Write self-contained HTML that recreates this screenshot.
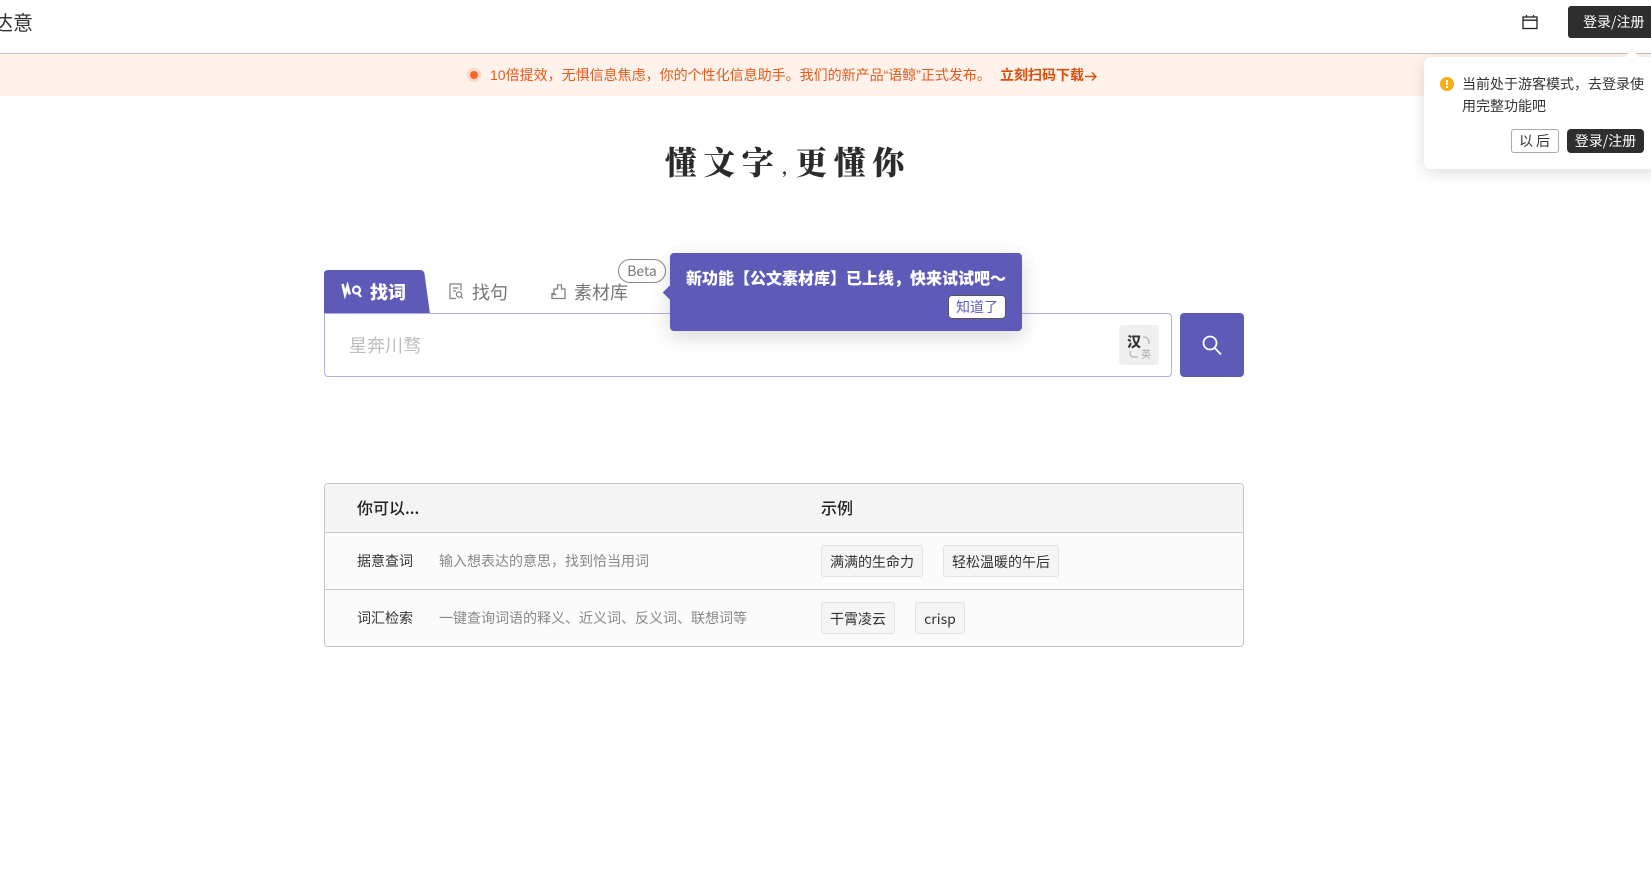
<!DOCTYPE html>
<html lang="zh-CN">
<head>
<meta charset="utf-8">
<title>达意</title>
<style>
html,body{margin:0;padding:0;width:1651px;height:888px;overflow:hidden;background:#fff;}
body{position:relative;font-family:"Liberation Sans","Noto Sans CJK SC",sans-serif;font-size:14px;color:#333;}
.a{position:absolute;white-space:nowrap;}
.n{font-family:"Noto Sans CJK SC",sans-serif;}
.tag{position:absolute;height:30px;line-height:32px;background:#f5f5f5;border:1px solid #e2e2e2;border-radius:3px;text-align:center;font-family:"Noto Sans CJK SC",sans-serif;font-size:14px;color:#333;box-sizing:content-box;}
</style>
</head>
<body>
<!-- header -->
<div class="a" style="left:0;top:53px;width:1651px;height:1px;background:#c8c4c4"></div>
<div class="a n" style="left:-7px;top:8px;font-size:20px;line-height:28px;color:#333">达意</div>
<svg class="a" style="left:1522px;top:14px" width="16" height="16" viewBox="0 0 16 16" fill="none" stroke="#222" stroke-width="1.3"><rect x="1" y="3" width="14" height="11.5"/><path d="M1 6.2H15M4.5 1V3M11.5 1V3"/></svg>
<div class="a n" style="left:1568px;top:6px;width:90px;height:32px;background:#2e2e2e;border-radius:3px;color:#fff;line-height:32px;padding-left:15px;box-sizing:border-box;font-size:14px">登录/注册</div>

<!-- banner -->
<div class="a" style="left:0;top:54px;width:1651px;height:42px;background:#fef2ea"></div>
<div class="a" style="left:467px;top:68px;width:14px;height:14px;border-radius:50%;background:#fcd9c6"></div>
<div class="a" style="left:470px;top:71px;width:8px;height:8px;border-radius:50%;background:#f7672a"></div>
<div class="a" style="left:490px;top:64px;font-size:14px;line-height:22px;color:#e35a1c">10倍提效&#65292;无惧信息焦虑&#65292;你的个性化信息助手。我们的新产品“语鲸”正式发布。</div>
<div class="a n" style="left:1000px;top:64px;font-size:14px;line-height:22px;font-weight:700;color:#d94f0c">立刻扫码下载</div>
<svg class="a" style="left:1084px;top:69px" width="14" height="14" viewBox="0 0 14 14" fill="none" stroke="#d94f0c" stroke-width="1.4"><path d="M1 7.5H12M8 3.5L12 7.5L8 11.5"/></svg>

<!-- title -->
<div class="a" style="left:665px;top:138px;font-family:'Noto Serif CJK SC',serif;font-size:32px;line-height:46px;font-weight:900;color:#2b2b2b;letter-spacing:6.4px">懂文字<span style="font-size:16px;letter-spacing:8.2px;margin-left:1.6px">,</span>更懂你</div>

<!-- tabs -->
<svg class="a" style="left:324px;top:270px" width="108" height="44" viewBox="0 0 108 44"><path d="M0 44V4Q0 0 4 0H96Q100 0 100.500 4L106 44Z" fill="#5e5bb8"/></svg>
<svg class="a" style="left:341px;top:281px" width="22" height="20" viewBox="0 0 22 20" fill="none" stroke="#fff"><path stroke-width="2.600" d="M1.500 3L4 13.500L6.500 5L8.800 13.500"/><circle stroke-width="2.200" cx="15.500" cy="9" r="3.500"/><path stroke-width="2.200" d="M16.500 11.500L20 16"/></svg>
<div class="a n" style="left:370px;top:278px;font-size:18px;line-height:28px;font-weight:900;color:#fff">找词</div>
<svg class="a" style="left:449px;top:283px" width="15" height="17" viewBox="0 0 15 17" fill="none" stroke="#808080" stroke-width="1.200"><path d="M7 15.500H1V1H12V7.500M4 5H9.500M4 8H7"/><circle cx="10" cy="11.500" r="2.600"/><path d="M12 13.500L14 15.500"/></svg>
<div class="a n" style="left:472px;top:278px;font-size:18px;line-height:28px;color:#777">找句</div>
<svg class="a" style="left:551px;top:283px" width="15" height="17" viewBox="0 0 15 17" fill="none" stroke="#808080" stroke-width="1.300"><path d="M1 15.500H14V6H10.500V2H6.500V6H3V10.500H1Z"/><path d="M1 11.500H5.500"/></svg>
<div class="a n" style="left:574px;top:278px;font-size:18px;line-height:28px;color:#777">素材库</div>
<div class="a n" style="left:618px;top:259px;width:48px;height:24px;box-sizing:border-box;border:1px solid #888;border-radius:12px;background:#fff;text-align:center;line-height:22px;font-size:14px;color:#777">Beta</div>

<!-- search -->
<div class="a" style="left:324px;top:313px;width:848px;height:64px;box-sizing:border-box;border:1px solid #b3aee0;border-radius:0 4px 4px 4px;background:#fff"></div>
<div class="a n" style="left:349px;top:332px;font-size:18px;line-height:26px;color:#bdbdbd">星奔川骛</div>
<div class="a" style="left:1119px;top:325px;width:40px;height:40px;background:#f0f0f0;border-radius:4px"></div>
<div class="a n" style="left:1127px;top:332px;font-size:14px;line-height:20px;font-weight:900;color:#333">汉</div>
<div class="a n" style="left:1141px;top:347px;font-size:10px;line-height:14px;color:#aaa">英</div>
<svg class="a" style="left:1119px;top:325px" width="40" height="40" viewBox="0 0 40 40" fill="none" stroke="#b5b5b5" stroke-width="1.300"><path d="M24 12Q29 12 30 16V19M11 26V28Q11 32 15 32H19"/></svg>
<div class="a" style="left:1180px;top:313px;width:64px;height:64px;background:#5e5bb8;border-radius:4px"></div>
<svg class="a" style="left:1201px;top:334px" width="22" height="22" viewBox="0 0 22 22" fill="none" stroke="#fff" stroke-width="1.800"><circle cx="9" cy="9" r="6.500"/><path d="M13.500 13.800L20 20.500"/></svg>

<!-- tooltip -->
<div class="a" style="left:670px;top:253px;width:352px;height:78px;background:#5e5bb8;border-radius:4px;box-shadow:0 6px 20px rgba(0,0,0,.16)"></div>
<div class="a" style="left:665px;top:287px;width:11px;height:11px;background:#5e5bb8;transform:rotate(45deg)"></div>
<div class="a n" style="left:686px;top:265px;font-size:16px;line-height:24px;font-weight:900;color:#fff">新功能【公文素材库】已上线&#65292;快来试试吧&#65374;</div>
<div class="a n" style="left:948px;top:295px;width:58px;height:24px;box-sizing:border-box;background:#fff;border:1px solid #555;border-radius:4px;text-align:center;line-height:22px;font-size:14px;color:#5e5bb8">知道了</div>

<!-- table -->
<div class="a" style="left:324px;top:483px;width:920px;height:164px;box-sizing:border-box;border:1px solid #c6c6c6;border-radius:4px;background:#fbfbfb;overflow:hidden">
  <div style="height:48px;background:#f4f4f4;border-bottom:1px solid #c6c6c6"></div>
  <div style="height:56px;border-bottom:1px solid #c6c6c6"></div>
</div>
<div class="a n" style="left:357px;top:495px;font-size:16px;line-height:24px;font-weight:500;color:#222">你可以...</div>
<div class="a n" style="left:821px;top:495px;font-size:16px;line-height:24px;font-weight:500;color:#222">示例</div>
<div class="a n" style="left:357px;top:550px;font-size:14px;line-height:22px;color:#333">据意查词</div>
<div class="a n" style="left:439px;top:550px;font-size:14px;line-height:22px;color:#888">输入想表达的意思&#65292;找到恰当用词</div>
<div class="a n" style="left:357px;top:607px;font-size:14px;line-height:22px;color:#333">词汇检索</div>
<div class="a n" style="left:439px;top:607px;font-size:14px;line-height:22px;color:#888">一键查询词语的释义、近义词、反义词、联想词等</div>
<div class="tag" style="left:821px;top:545px;width:100px">满满的生命力</div>
<div class="tag" style="left:943px;top:545px;width:114px">轻松温暖的午后</div>
<div class="tag" style="left:821px;top:602px;width:72px">干霄凌云</div>
<div class="tag" style="left:915px;top:602px;width:48px">crisp</div>

<!-- popover -->
<div class="a" style="left:1424px;top:57px;width:240px;height:112px;background:#fff;border-radius:6px;box-shadow:0 4px 16px rgba(0,0,0,.13)"></div>
<div class="a" style="left:1627px;top:52px;width:10px;height:10px;background:#fff;transform:rotate(45deg)"></div>
<div class="a" style="left:1440px;top:77px;width:14px;height:14px;border-radius:50%;background:#faad14"></div>
<div class="a" style="left:1446px;top:80px;width:2px;height:5px;background:#fff"></div>
<div class="a" style="left:1446px;top:86px;width:2px;height:2px;background:#fff"></div>
<div class="a n" style="left:1462px;top:73px;font-size:14px;line-height:22px;color:#333">当前处于游客模式&#65292;去登录使<br>用完整功能吧</div>
<div class="a n" style="left:1511px;top:129px;width:48px;height:24px;box-sizing:border-box;background:#fff;border:1px solid #aaa;border-radius:3px;text-align:center;line-height:22px;font-size:14px;color:#333;letter-spacing:3px;padding-left:2px">以后</div>
<div class="a n" style="left:1567px;top:129px;width:77px;height:24px;background:#2e2e2e;border-radius:4px;text-align:center;line-height:24px;font-size:14px;color:#fff">登录/注册</div>
</body>
</html>
